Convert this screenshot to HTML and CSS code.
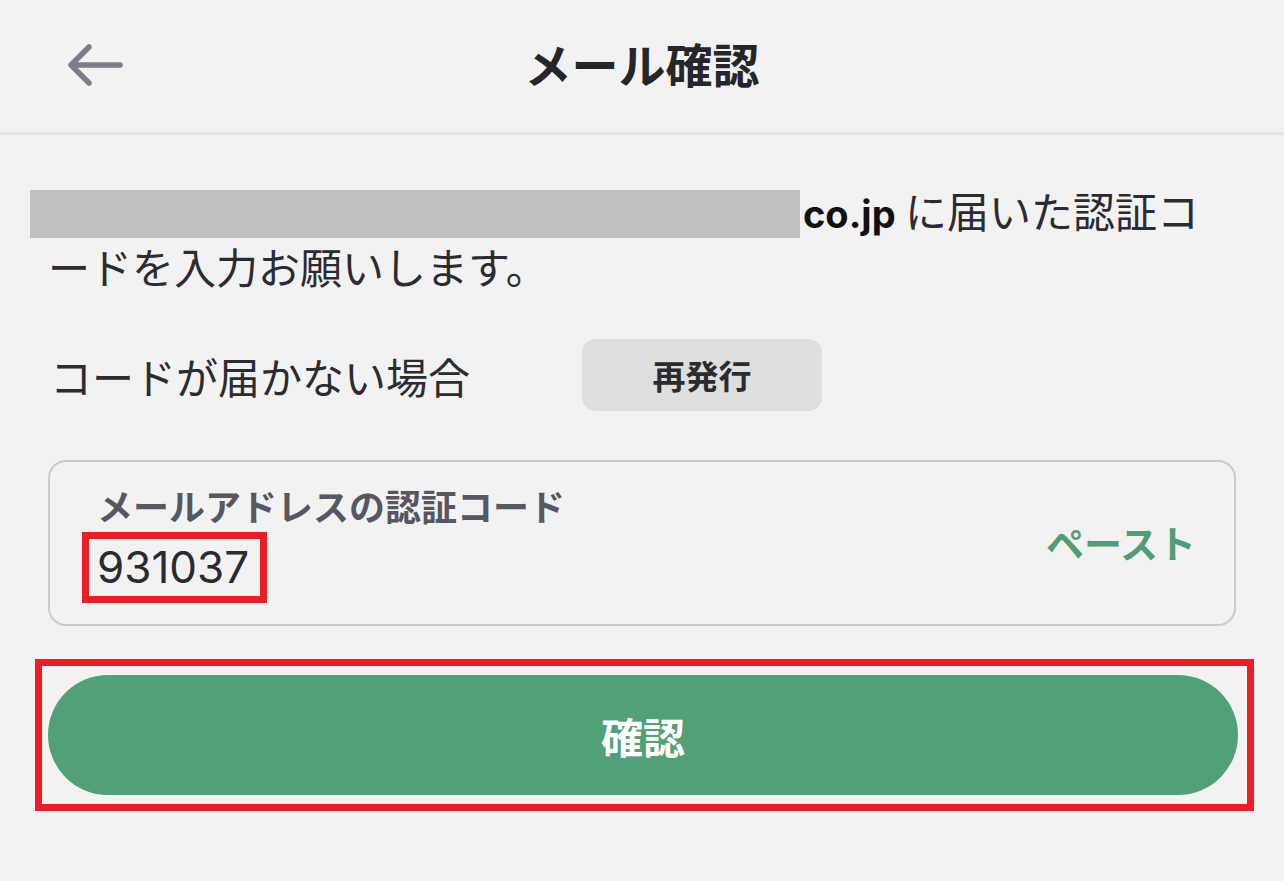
FILE: index.html
```html
<!DOCTYPE html>
<html lang="ja">
<head>
    <meta charset="UTF-8">
    <meta name="viewport" content="width=device-width, initial-scale=1.0">
    <title>メール確認</title>
    <link rel="stylesheet" href="styles.css">
</head>
<body>

    <header class="topbar">
        <div class="topbar-left">
            <button class="back-btn" aria-label="戻る">
                <svg width="60" height="48" viewBox="0 0 60 48">
                    <path d="M54 24 H6 M23 6 L5 24 L23 42" fill="none" stroke="#7b7e88" stroke-width="5.5" stroke-linecap="round" stroke-linejoin="round"/>
                </svg>
            </button>
        </div>
        <h1 class="topbar-title">メール確認</h1>
        <div></div>
    </header>

    <main class="content">
        <p class="intro">
            <span class="masked"></span><b class="domain">co.jp</b> に届いた認証コ<br>ードを入力お願いします。
        </p>

        <div class="resend-row">
            <span class="resend-label">コードが届かない場合</span>
            <button class="resend-btn">再発行</button>
        </div>

        <div class="code-field">
            <div class="code-main">
                <label class="code-label" for="code">メールアドレスの認証コード</label>
                <div class="code-value" id="code">931037</div>
            </div>
            <button class="paste-btn">ペースト</button>
        </div>

        <div class="confirm-wrap">
            <button class="confirm-btn">確認</button>
        </div>
    </main>

</body>
</html>
```

FILE: styles.css
```css
* {
    box-sizing: border-box;
}
body {
    margin: 0;
    background: #f2f2f2;
    color: #2b2b30;
    font-family: Inter, "Noto Sans CJK JP", sans-serif;
}
button {
    font-family: inherit;
    border: none;
    cursor: pointer;
}

/* header */
.topbar {
    display: grid;
    grid-template-columns: 1fr auto 1fr;
    align-items: center;
    height: 135px;
    border-bottom: 3px solid #e5e5e5;
}
.topbar-left {
    padding-left: 66px;
    padding-bottom: 2px;
}
.back-btn {
    background: none;
    padding: 0;
    display: block;
}
.back-btn svg {
    display: block;
}
.topbar-title {
    margin: 0;
    font-family: "Noto Sans CJK JP", sans-serif;
    font-size: 47px;
    font-weight: 700;
    color: #26262a;
    line-height: 1;
    padding-bottom: 7px;
}

/* content */
.content {
    padding: 0 48px;
}
.intro {
    margin: 49px 0 0;
    font-size: 42px;
    line-height: 51px;
    font-family: "Noto Sans CJK JP", sans-serif;
    font-weight: 400;
}
.masked {
    display: inline-block;
    width: 770px;
    height: 48px;
    margin-left: -18px;
    margin-right: 3px;
    background: #c1c1c1;
    vertical-align: -10px;
}
.domain {
    font-family: Inter, sans-serif;
    font-weight: 700;
    font-size: 38px;
    color: #111;
}

.resend-row {
    display: flex;
    align-items: center;
    margin-top: 48px;
}
.resend-label {
    width: 534px;
    padding-left: 2px;
    font-family: "Noto Sans CJK JP", sans-serif;
    font-size: 42px;
}
.resend-btn {
    width: 240px;
    height: 72px;
    background: #dedede;
    border-radius: 14px;
    font-size: 33px;
    font-weight: 700;
    color: #2b2b30;
    font-family: "Noto Sans CJK JP", sans-serif;
}

/* code input */
.code-field {
    display: flex;
    align-items: center;
    justify-content: space-between;
    margin-top: 49px;
    height: 166px;
    border: 2px solid #cbcbcb;
    border-radius: 18px;
    padding: 0 38px 0 32px;
}
.code-main {
    display: flex;
    flex-direction: column;
    align-items: flex-start;
    padding-top: 0;
}
.code-label {
    font-family: "Noto Sans CJK JP", sans-serif;
    font-size: 36px;
    font-weight: 700;
    color: #575762;
    line-height: 44px;
    padding-left: 15px;
}
.code-value {
    margin-top: 5px;
    border: 7px solid #ee1c25;
    padding: 0 11px 0 8px;
    font-size: 44px;
    line-height: 57px;
    color: #2a2a30;
}
.paste-btn {
    background: none;
    padding: 0;
    margin-bottom: 4px;
    font-family: "Noto Sans CJK JP", sans-serif;
    font-size: 38px;
    font-weight: 700;
    color: #4f9e76;
}

/* confirm */
.confirm-wrap {
    margin: 33px -18px 0 -13px;
    border: 7px solid #ee1c25;
    padding: 9px 9px 9px 6px;
}
.confirm-btn {
    display: block;
    width: 100%;
    height: 120px;
    border-radius: 60px;
    background: #52a078;
    color: #fff;
    font-family: "Noto Sans CJK JP", sans-serif;
    font-size: 42px;
    font-weight: 700;
}
```
